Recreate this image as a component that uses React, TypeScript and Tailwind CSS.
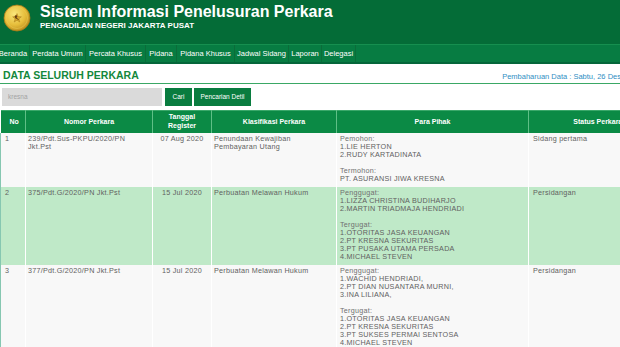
import React from "react"

// Case search result page: green court header, menu, search bar and the case table.

const menu = [
  { label: "Beranda", w: "w-[33px]" },
  { label: "Perdata Umum", w: "w-[56px]" },
  { label: "Percata Khusus", w: "w-[60px]" },
  { label: "Pidana", w: "w-[31px]" },
  { label: "Pidana Khusus", w: "w-[58px]" },
  { label: "Jadwal Sidang", w: "w-[54px]" },
  { label: "Laporan", w: "w-[33px]" },
  { label: "Delegasi", w: "w-[34px]" },
]

type Row = {
  no: string
  nomor: string
  tanggal: string
  klasifikasi: string
  pihak: string[][]
  status: string
  bg: string
}

const rows: Row[] = [
  {
    no: "1",
    nomor: "239/Pdt.Sus-PKPU/2020/PN Jkt.Pst",
    tanggal: "07 Aug 2020",
    klasifikasi: "Penundaan Kewajiban Pembayaran Utang",
    pihak: [
      ["Pemohon:", "1.LIE HERTON", "2.RUDY KARTADINATA"],
      ["Termohon:", "PT. ASURANSI JIWA KRESNA"],
    ],
    status: "Sidang pertama",
    bg: "bg-[#f8f8f8]",
  },
  {
    no: "2",
    nomor: "375/Pdt.G/2020/PN Jkt.Pst",
    tanggal: "15 Jul 2020",
    klasifikasi: "Perbuatan Melawan Hukum",
    pihak: [
      ["Penggugat:", "1.LIZZA CHRISTINA BUDIHARJO", "2.MARTIN TRIADMAJA HENDRIADI"],
      [
        "Tergugat:",
        "1.OTORITAS JASA KEUANGAN",
        "2.PT KRESNA SEKURITAS",
        "3.PT PUSAKA UTAMA PERSADA",
        "4.MICHAEL STEVEN",
      ],
    ],
    status: "Persidangan",
    bg: "bg-[#bfe9c8]",
  },
  {
    no: "3",
    nomor: "377/Pdt.G/2020/PN Jkt.Pst",
    tanggal: "15 Jul 2020",
    klasifikasi: "Perbuatan Melawan Hukum",
    pihak: [
      ["Penggugat:", "1.WACHID HENDRIADI,", "2.PT DIAN NUSANTARA MURNI,", "3.INA LILIANA,"],
      [
        "Tergugat:",
        "1.OTORITAS JASA KEUANGAN",
        "2.PT KRESNA SEKURITAS",
        "3.PT SUKSES PERMAI SENTOSA",
        "4.MICHAEL STEVEN",
      ],
    ],
    status: "Persidangan",
    bg: "bg-[#f8f8f8]",
  },
]

function Logo() {
  return (
    <svg width="28" height="28" viewBox="0 0 28 28" className="flex-none">
      <defs>
        <radialGradient id="gold" cx="40%" cy="35%" r="70%">
          <stop offset="0%" stopColor="#fbe77c" />
          <stop offset="60%" stopColor="#e6bd3a" />
          <stop offset="100%" stopColor="#b98a1c" />
        </radialGradient>
      </defs>
      <circle cx="14" cy="14" r="13" fill="url(#gold)" stroke="#a67a17" strokeWidth="0.8" />
      <circle cx="14" cy="14" r="10.5" fill="none" stroke="#f3d35c" strokeWidth="0.6" opacity="0.7" />
      <path d="M14 9.5 L15.2 12.6 L18.4 12.8 L15.9 14.8 L16.8 18 L14 16.2 L11.2 18 L12.1 14.8 L9.6 12.8 L12.8 12.6 Z" fill="#d9a92c" stroke="#9a6d12" strokeWidth="0.4" />
      <circle cx="13" cy="12.6" r="1.3" fill="#6b3f12" />
      <path d="M12 13.5 L15.5 15.5" stroke="#5a3510" strokeWidth="0.9" />
    </svg>
  )
}

export default function App() {
  return (
    <div className="w-[620px] h-[347px] overflow-hidden bg-white font-['Liberation_Sans',Arial,sans-serif]">
      <div className="w-[666px]">
        {/* header */}
        <div className="flex h-[44px] items-start bg-[#046c37] pl-[3px] pt-[4px]">
          <Logo />
          <div className="ml-[9px] text-white">
            <div className="text-[16px] font-bold leading-none">Sistem Informasi Penelusuran Perkara</div>
            <div className="mt-[1.5px] text-[8px] font-bold leading-none">PENGADILAN NEGERI JAKARTA PUSAT</div>
          </div>
        </div>

        {/* menu */}
        <div className="flex h-[20px] border-t border-[#168f4f] border-b-2 border-b-[#05663a] bg-[#077c42] -ml-[3px]">
          {menu.map((m) => (
            <div
              key={m.label}
              className={`${m.w} flex items-center justify-center border-r border-[#0b6c39] text-[7.5px] leading-none text-white whitespace-nowrap`}
            >
              {m.label}
            </div>
          ))}
        </div>

        {/* title row */}
        <div className="flex items-end justify-between border-b border-[#3aa865] pl-[3px] pr-[5px] pt-[6px] pb-[2px]">
          <h1 className="text-[10.5px] font-bold leading-none text-[#14883c]">DATA SELURUH PERKARA</h1>
          <span className="text-[7.5px] leading-none text-[#2f8fc4] whitespace-nowrap">
            Pembaharuan Data : Sabtu, 26 Desember 2020
          </span>
        </div>

        {/* search */}
        <div className="mt-[4px] flex h-[18px] pl-[2px]">
          <div className="flex w-[160px] items-center bg-[#dadada] pl-[6px] text-[6.5px] text-[#a3a3a3]">kresna</div>
          <button className="ml-[3px] w-[27px] bg-[#097c3f] text-[6.5px] text-white">Cari</button>
          <button className="ml-[2px] w-[57px] bg-[#097c3f] text-[6.5px] text-white">Pencarian Detil</button>
        </div>

        {/* table */}
        <table className="mt-[4px] w-[666px] table-fixed border-collapse">
          <colgroup>
            <col className="w-[25px]" />
            <col className="w-[127px]" />
            <col className="w-[59px]" />
            <col className="w-[125px]" />
            <col className="w-[192px]" />
            <col className="w-[138px]" />
          </colgroup>
          <thead>
            <tr className="h-[23px] border-t border-[#3ba86a] bg-[#0b8a45] text-[7px] font-bold leading-[8.5px] text-white">
              <th className="border-r border-[#5fbf86] pl-[9px] text-left">No</th>
              <th className="border-r border-[#5fbf86]">Nomor Perkara</th>
              <th className="border-r border-[#5fbf86]">
                Tanggal
                <br />
                Register
              </th>
              <th className="border-r border-[#5fbf86]">Klasifikasi Perkara</th>
              <th className="border-r border-[#5fbf86]">Para Pihak</th>
              <th>Status Perkara</th>
            </tr>
          </thead>
          <tbody className="text-[7.2px] leading-[8px] tracking-[0.25px] text-[#616161]">
            {rows.map((r) => (
              <tr key={r.no} className={`${r.bg} align-top`}>
                <td className="border-l border-[#86c7b1] border-r border-r-white pl-[4px] pt-[2px] pb-[4px]">{r.no}</td>
                <td className="border-r border-white pl-[2px] pr-[6px] pt-[2px] pb-[4px]">{r.nomor}</td>
                <td className="border-r border-white pt-[2px] pb-[4px] text-center">{r.tanggal}</td>
                <td className="border-r border-white pl-[2px] pr-[3px] pt-[2px] pb-[4px]">{r.klasifikasi}</td>
                <td className="border-r border-white pl-[3px] pt-[2px] pb-[4px]">
                  {r.pihak.map((group, gi) => (
                    <div key={gi} className={gi > 0 ? "mt-[8px]" : ""}>
                      {group.map((line, li) => (
                        <div key={line} className={li === 0 ? "text-[#707070]" : ""}>
                          {line}
                        </div>
                      ))}
                    </div>
                  ))}
                </td>
                <td className="pl-[4px] pt-[2px] pb-[4px]">{r.status}</td>
              </tr>
            ))}
          </tbody>
        </table>
      </div>
    </div>
  )
}
